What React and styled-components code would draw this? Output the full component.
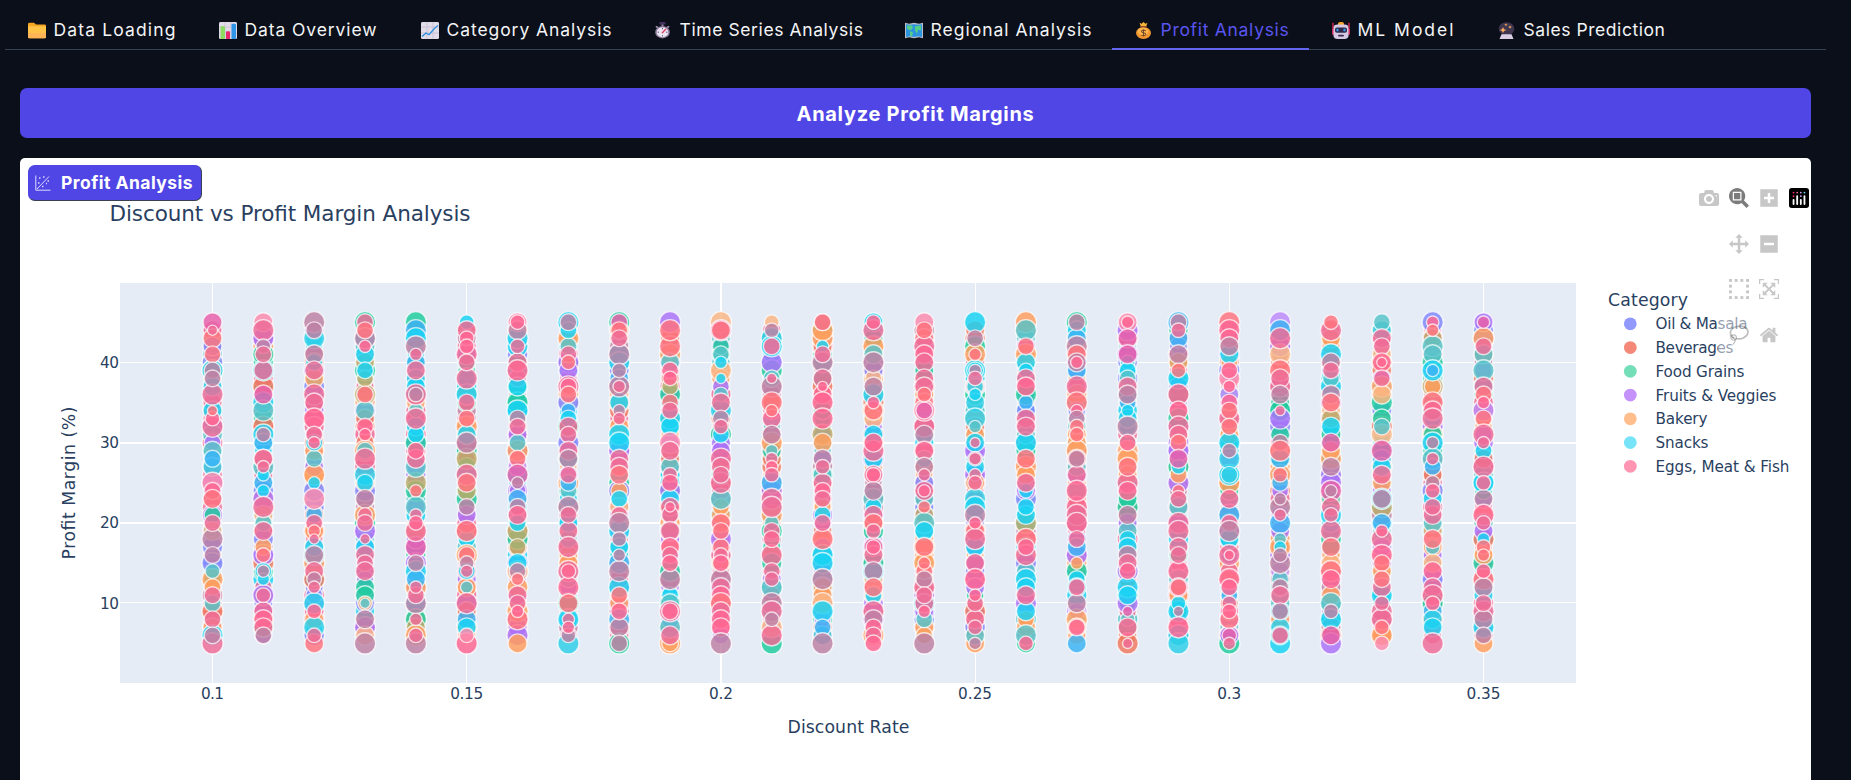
import React, { useLayoutEffect, useRef, useState } from "react";
import styled, { createGlobalStyle } from "styled-components";

const Global = createGlobalStyle`
  html, body { margin: 0; height: 100%; overflow: hidden; background: #0b0f19; }
  * { box-sizing: border-box; }
`;

const Page = styled.main`
  height: 780px;
  overflow: hidden;
  background: #0b0f19;
  font-family: Inter, "Liberation Sans", sans-serif;
`;
const TabBar = styled.nav`
  display: flex;
  width: 1821px;
  height: 50px;
  margin-left: 5px;
  border-bottom: 1px solid #374151;
`;
const Tab = styled.button`
  display: flex;
  align-items: center;
  flex: none;
  gap: 8px;
  width: ${(p) => p.$width}px;
  height: 50px;
  padding: 12px 0 0 22.500px;
  border: 0;
  border-bottom: 2px solid ${(p) => (p.$active ? "#6366f1" : "transparent")};
  background: none;
  color: ${(p) => (p.$active ? "#5a55ee" : "#f3f4f6")};
  font: 400 17.500px/24px Inter, sans-serif;
  white-space: nowrap;
  svg { flex: none; }
`;
const Panel = styled.section`
  display: flex;
  flex-direction: column;
  gap: 20px;
  width: 1791px;
  margin: 38px 0 0 20px;
`;
const AnalyzeButton = styled.button`
  display: flex;
  align-items: center;
  justify-content: center;
  height: 50px;
  padding: 1px 0 0;
  border: 0;
  border-radius: 7px;
  background: #4f46e5;
  color: #fff;
  font: 700 20px/26px Inter, sans-serif;
`;
const PlotCard = styled.div`
  position: relative;
  height: 660px;
  border-radius: 5px 5px 0 0;
  background: #fff;
  overflow: hidden;
`;
const PlotBadge = styled.div`
  position: absolute;
  left: 8px;
  top: 7px;
  display: flex;
  align-items: center;
  gap: 10px;
  width: 174px;
  height: 36px;
  padding: 0 0 1px 6px;
  border: 1px solid #4f46e5;
  border-right-color: #374151;
  border-bottom-color: #374151;
  border-radius: 7px;
  background: #4f46e5;
  color: #fff;
  font: 700 17.500px/24px Inter, sans-serif;
  svg { flex: none; }
`;
const ModeBar = styled.div`
  position: absolute;
  top: 30px;
  right: 2px;
  display: flex;
  gap: 10px;
`;
const ModeGroup = styled.div`
  display: flex;
  flex-direction: column;
  gap: 25.700px;
  width: 20px;
`;
const ModeOverlay = styled.div`
  position: absolute;
  top: 28px;
  right: 0;
  width: 93px;
  height: 167px;
  background: rgba(255, 255, 255, 0.5);
`;
const ModeIcon = styled.svg`
  display: block;
  width: 20px;
  height: 20px;
  fill: ${(p) => (p.$active ? "rgba(68,68,68,.7)" : "rgba(68,68,68,.3)")};
`;
const Chart = styled.svg`
  display: block;
  font-family: "DejaVu Sans", Verdana, sans-serif;
  fill: #2a3f5f;
`;
const Word = styled.span`
  display: inline-block;
  white-space: nowrap;
`;

/* Tracks a label so that it spans a given width. */
function Label({ text, width }) {
  const ref = useRef(null);
  const [track, setTrack] = useState(0);
  useLayoutEffect(() => {
    const natural = ref.current.getBoundingClientRect().width - track * text.length;
    setTrack((width - natural) / text.length);
  }, [text, width]);
  return <Word ref={ref} style={{ letterSpacing: track }}>{text}</Word>;
}

const emoji = {
  folder: (
    <>
      <path d="M0 2.5Q0 1 1.5 1H6l2 2h8.5Q18 3 18 4.5V9H0z" fill="#f5a623" />
      <path d="M0 5h16.500Q18 5 18 6v12q0 1-1.500 1h-15Q0 19 0 18z" fill="#ffc348" />
      <path d="M0 13h18v5q0 1-1.500 1h-15Q0 19 0 18z" fill="#ffb555" />
    </>
  ),
  bars: (
    <>
      <rect width="18" height="20" y="0" rx="1.500" fill="#e2dbea" />
      <path d="M6 0v20M12 0v20M0 6h18M0 13h18" stroke="#c9bfd6" strokeWidth=".7" />
      <rect x="1.500" y="5" width="4.500" height="15" rx="1" fill="#8ddb62" />
      <rect x="7" y="11" width="4" height="9" rx="1" fill="#e8286e" />
      <rect x="12.500" y="2" width="4.500" height="18" rx="1" fill="#2f95e6" />
    </>
  ),
  trend: (
    <>
      <rect width="18" height="20" rx="1.500" fill="#e2dbea" />
      <path d="M6 0v20M12 0v20M0 6h18M0 13h18" stroke="#c5b8d0" strokeWidth=".8" />
      <path d="M1 17l4-4 3 2 5-7 4-4" fill="none" stroke="#2c8fdc" strokeWidth="1.500" />
    </>
  ),
  watch: (
    <>
      <rect x="5.500" y="0" width="6" height="3" rx="1" fill="#45305f" />
      <path d="M8.500 3v2M2 5l2 2M15 5l-2 2" stroke="#9b8bab" strokeWidth="2" />
      <circle cx="8.500" cy="12" r="7.300" fill="#8b7b9c" />
      <circle cx="8.500" cy="12" r="5.800" fill="#ece6f2" />
      <path d="M8.500 7v1.500M8.500 15.500V17M3.500 12H5M12 12h1.500" stroke="#5b4670" />
      <path d="M8 13l4-5" stroke="#e03a5c" strokeWidth="1.500" />
    </>
  ),
  map: (
    <>
      <path d="M0 1l4 1 5-1 5 1 4-1v18l-4-1-5 1-5-1-4 1z" fill="#b9bfc8" />
      <path d="M1 2.500l4 .8 4-.8 4 .8 4-.8v15l-4-.8-4 .8-4-.8-4 .8z" fill="#2c93df" />
      <path d="M2 4l5 0 1 3-3 3-3-2zM5 11l3 1-1 5-2-1zM10 5l6-1v6l-3-1-1 5-2-4z" fill="#55cf88" />
    </>
  ),
  money: (
    <>
      <path d="M4.500 1l2 1 2-2 2 2 2-1-1.500 5H6z" fill="#f7b535" />
      <ellipse cx="8.500" cy="13" rx="7.500" ry="7" fill="#f0962f" />
      <ellipse cx="8" cy="11" rx="5.500" ry="4.500" fill="#ffb54b" />
      <path d="M5 5.500h7" stroke="#8b4a32" strokeWidth="1.500" />
      <path d="M10.800 10.500Q8.500 8.500 6.700 10.300 6 12 8.500 12.700q3 .8 2 2.600-1.800 1.700-4.200.2M8.500 8.500v8.500" fill="none" stroke="#72482c" strokeWidth="1.100" />
    </>
  ),
  robot: (
    <>
      <path d="M1 1v8M17 1v8" stroke="#e0264f" strokeWidth="1.400" />
      <rect x="6" y="0" width="6" height="5" rx="2" fill="#f6a52f" />
      <rect x="0" y="8" width="3" height="7" rx="1" fill="#d42f63" />
      <rect x="15" y="8" width="3" height="7" rx="1" fill="#d42f63" />
      <rect x="1.500" y="3" width="15" height="17" rx="4" fill="#d6c9e3" />
      <rect x="3" y="6.500" width="12" height="6" rx="2" fill="#332849" />
      <path d="M5.500 8v3M12.500 8v3" stroke="#2aa8f2" strokeWidth="2" />
      <rect x="6" y="15" width="6" height="2" rx="1" fill="#3d2e50" />
    </>
  ),
  crystal: (
    <>
      <circle cx="8.500" cy="8" r="7.800" fill="#40354f" />
      <path d="M3.500 14.500h10l2 5.500H1.500z" fill="#d9cee3" />
      <path d="M5 6l1 2.500L8.500 9.500 6 10.500 5 13 4 10.500 1.800 9.500 4 8.500zM12 4l.6 1.400L14 6l-1.400.6L12 8l-.6-1.400L10 6l1.400-.6zM8 1.500l.5 1.300 1.300.5-1.300.5L8 5l-.5-1.300-1.300-.5 1.300-.5z" fill="#ffb05c" />
    </>
  ),
};

const tabs = [
  ["folder", "Data Loading", 191, 123],
  ["bars", "Data Overview", 202, 133],
  ["trend", "Category Analysis", 233, 166],
  ["watch", "Time Series Analysis", 251, 184],
  ["map", "Regional Analysis", 230, 162],
  ["money", "Profit Analysis", 197, 129],
  ["robot", "ML Model", 166, 98],
  ["crystal", "Sales Prediction", 210, 142],
];

const palette = {
  B: "#8088fb", R: "#f07960", G: "#20cc9e", V: "#ab72f8", W: "#bd8afb",
  A: "#bdaa6a", L: "#fab684", O: "#ff9f5e",
  T: "#58c3c9", D: "#30cfe8", U: "#3db4f4", C: "#19d3f3",
  M: "#bf82a5", H: "#fc8cae", K: "#ee6d97", S: "#ff7380", E: "#e760a9", P: "#ff6692",
};
const layerOf = { B: 0, R: 1, G: 2, V: 3, W: 3, A: 4, L: 4, O: 4, T: 5, D: 5, U: 5, C: 5 };

/* One line for each discount rate: margin, tint, radius (a = 10). */
const series = [
  "45E9 44K5 43S9 42B9 41S8 39Da 39M8 38M8 37C9 36Ka 34C9 34S5 33P7 32Ka 30V8 29T9 28U8 27D9 25Ha 24P8 23S9 21G8 20K8 19L9 18Ma 16M8 15Ba 14T7 13Oa 12O8 11K8 10T8 9Ra 8K8 7O9 6Ca 6M8 5Ka",
  "45H9 44Ka 43Va 42M7 41Ga 41K8 39Ca 39K9 37Ra 36E9 35Ca 34Ta 32Ra 31Ca 31M7 30U9 28S9 28K9 27K6 27Ta 26C6 25U9 24C6 23Va 22Ka 21L9 20T8 19K9 17O8 16Va 16S7 15Ra 14C8 14M6 13C6 11Va 11K7 9K9 8P9 7P9 6M8",
  "45Ma 44M8 43Da 41M9 40C8 39K9 38O9 36Ka 35K9 33Pa 31K8 30P6 30C8 29O9 28T8 27V9 26Oa 25C6 24Ba 23Ha 21U8 20K8 19S6 18K5 19O9 17C9 16M9 16Ta 15Oa 14K9 13M7 13Ra 12K6 11B8 10Da 9P7 8O9 7Da 6K7 5S9",
  "45Ga 45K8 44S8 43Ma 42P6 41C9 40A9 39C8 39Ga 38A8 36Aa 36S8 34T9 33R9 32P8 31P6 29Oa 29T8 28Ka 26Da 25C8 24Ba 25O9 23M9 21Oa 21K7 20Ga 20K8 19Va 18K5 17C9 16K9 15K8 14K9 13B8 12G9 11G9 10B9 10L7 10T5 8M9 7Va 6L9 5Ma",
  "45Ga 44Ua 43Ca 42Ma 41K6 40U9 39K9 38C9 37C9 36Ka 36M7 35L9 34T7 33Ka 32C9 31C8 30Ga 29P8 28K9 27Ta 25Aa 24Ga 24S6 22Ta 21K6 20P7 19Ka 17Ea 15M8 15Va 14Ca 13U9 12K6 12Oa 11K8 10Ma 8K6 8Ga 7A9 6K7 6Oa 5Ma",
  "45C7 44K9 43P7 42P7 41Ka 40K8 38Ka 36Ca 35P8 33S8 32Oa 31C9 30Ma 28Aa 26Ka 25S9 24A9 23Ga 22M8 21V9 19Sa 16Oa 16S8 15M7 14K6 14C8 12T6 12O9 10Ka 9R9 8U9 7C9 6H7 5Pa",
  "45H9 45P7 44M9 43Ca 42K7 40K9 39Pa 37C9 35Ga 34Ca 33M8 32K8 31V9 30T8 29Oa 28S8 27W9 26Ea 25M6 24V8 23U9 22M8 21P9 20C8 19Aa 18Ga 17A8 17R9 15C9 15Ba 14M8 13S6 14La 11K9 10K8 9P6 9Oa 8Sa 7V9 6Va 5O9",
  "45Ca 45M8 44C8 43Oa 42T8 41K8 40Va 39V9 40S7 37Ka 37P8 36S8 35Ba 34U7 33C8 32K9 32Ga 31K8 30Ba 29K9 28M9 28C9 26K8 26W9 25U8 24T8 22Ma 21K8 20C9 19K9 17Ka 15O9 14Ka 14P7 12Pa 10S9 10Ga 8Ca 8K6 7P6 6M7 5Da",
  "45Ga 45E8 44S8 43K8 44O9 41Ma 40Ca 39M7 38U9 37Ma 37K6 35C9 34M6 33K6 31Ca 30Ca 29Va 28K9 27K9 26S9 24Ba 24O8 23C8 22L9 21K8 21V9 20Ma 19Ca 18M7 17C9 16M6 15Ua 14Ma 12Ca 11S8 10O9 9P8 8Ua 7M9 5Ga 5M8",
  "45Va 44Sa 42Sa 41Oa 40T9 39P8 38P7 37A8 36Ga 35S8 34K8 33Ca 32C9 30Ha 29K9 28R9 27T9 26K7 25P8 24Va 23C9 22K9 22P5 21K8 19K9 17P9 16K8 15P8 14Ga 13Ma 11C8 10T9 9Ka 9P8 7Ta 6K9 5Oa 5O8",
  "45La 44Ea 44S9 42G8 41T8 40C6 39La 38C5 37V8 36T7 35K9 34Da 33M8 32K7 31C8 31Ga 30V9 29V9 28Ka 27K9 26K8 25Ka 23Ta 22O8 21O9 20S9 19S8 18Va 17S8 16K7 15P8 13Ma 12K9 11P9 10Sa 9K9 8P9 7P9 5Ma",
  "45L7 44M7 43Ca 42Ca 42P8 40Va 39Ga 38T8 37Ma 38K5 35Sa 34S6 33P9 31M9 30Oa 29T6 29G9 28K6 28R9 27P6 26K7 25Ua 24Va 23Ka 22Ka 21Oa 20T7 19K8 19Ga 18P8 16Ka 14K8 13K7 12Ta 10Ma 9Ka 8M7 7La 6Ka 5Ga",
  "45M8 45S8 44Oa 43Oa 42R9 42C6 41K8 40Ma 38K9 37P5 36P9 35Pa 33Pa 31Aa 30O9 28M9 27K7 26T9 25K9 24P8 23K8 22O8 21C8 20K8 18Sa 16Ca 15Ca 13Ma 12O9 11O9 10La 9Ca 8W8 7U8 6D9 5Ma",
  "45C9 44Ka 45P7 43G9 42Oa 41T9 40Ma 39B9 38L8 37M9 36Ca 35P6 35Ra 34S9 34Oa 33L9 31C9 29Ka 30P9 28Va 28C9 26K9 26P7 24M9 23Ta 22C8 21K9 20S9 19K7 17K9 17P7 16K9 15Ga 14M9 14Ca 13L9 12S9 11L9 11C8 9Ka 8M9 7P8 6Oa 6K8 5P8",
  "45H9 44S8 43S9 42Ka 41P9 40K9 39G9 38K9 37K9 36S7 36O9 35S9 34Ha 34E8 32Ka 31M9 29P9 28T8 27M9 26K6 25B9 24K9 24P6 23T9 22S6 21A9 20Ta 19C9 17S9 17Oa 15S6 15Oa 14S8 13M8 12Ka 11K8 10K9 10Ca 9P6 9V9 8T8 7O9 6O8 5Ma",
  "45Ca 43M8 42Ga 41Oa 41S6 39Ca 39C8 39M6 38K7 37D8 37L9 36C6 35D9 33Da 32T6 31O9 30C9 30K5 29Va 28K6 28M7 27C9 26K6 26Va 25K7 25O9 23Da 22Ca 21Ma 20P6 19S9 18Ka 17C9 15K9 15V9 13Pa 11P6 12V9 10K8 9Ra 8K9 7K7 6T9 5O9 5M6",
  "45Oa 44Ta 42S8 42V9 41Oa 40D9 39C7 38K9 37P9 36Ga 35U7 34B9 33K9 32K9 31T9 30Ca 28S9 27Oa 26O9 25K9 24C7 24V9 23Ba 22C8 21C9 20Aa 18Sa 16Ka 17P8 15Ba 14T9 13Ca 12C9 11K9 10Va 9C9 8O8 7O9 6Ta 5G9 5P7",
  "45Ga 45M8 44C9 43U9 42Ma 41S9 40M9 40P6 39U9 37Ka 35Sa 34P6 33M8 32S7 31S7 31O9 30O9 29Oa 28M8 28S9 27T9 26K9 24Pa 22Pa 21Ka 20Ka 18K8 17U9 16Va 15O6 14Ga 13C8 12P8 12C9 10M9 9W8 8Oa 7P8 7L9 5U9",
  "45H9 45P6 44Va 43E9 41E9 41Va 40D7 39C8 38T8 37K9 36M9 35U8 34C6 33C9 32Ma 30P8 29La 28Oa 27S9 26O9 25Ka 24P9 23G9 22Ga 21M9 20V9 19T9 18C8 17C9 16M9 15K9 14P8 14Va 12Ca 11C9 10Va 9E5 8T7 7P9 5Ra 5K5",
  "45Ua 45M8 44K7 43U9 41M9 40O9 39S7 38Ca 36Pa 34P9 33Ga 32Ka 31K9 30S8 31O9 29Va 28E9 27C7 27Ga 26O8 25Va 24S6 23K8 22T9 20Ka 19Ka 17K9 16G9 16K8 14Pa 12E9 12S8 11O9 10C7 9Ca 9M5 7Pa 6Ca 5Da",
  "45Sa 44Pa 43P9 42M9 41C9 40O8 38Ha 39P8 39Ba 37P6 36W9 35P8 34S8 33Ka 32S8 31O9 30Ca 29M7 28Da 26Ca 26D8 25Oa 24G9 23P9 21Ua 20P8 19Ma 18C9 16Ka 16P5 13Pa 12P8 11U8 10K7 9P7 8S9 6V9 6E7 5Ga 5K6",
  "45Wa 44Ua 43Ka 42Va 41La 39Sa 38K9 37Ka 36M9 35G9 34K5 34Ga 33Va 32Ba 31G9 30M8 29Sa 28U9 26Oa 26S7 25U8 24V8 23M6 22Ma 21K6 20Ua 19V9 18T6 17Oa 17C6 16M7 15Ma 14W9 13T8 12T9 12M8 11K9 9C9 9M8 8O9 7D9 6P8 6C9 5Ca",
  "45S7 44Ka 43O9 41Ca 40M9 39K8 40O9 38T8 37Ca 36M9 35S9 35Va 34L9 33A9 32C9 30E9 29O9 28Oa 27M9 26Va 25Va 24Ea 24M6 23G9 22K9 21K7 21Ca 19Ka 17S9 15L9 14Sa 13P9 11O9 10Ta 9M7 8Ca 6E9 6Ra 5Va",
  "45T8 44C9 43K9 42K8 41L9 40P9 40P5 38K8 37Oa 36L9 35Ga 33G9 32Ra 32T8 31La 29Ea 28U9 27C9 26K9 25O9 23M9 23Ca 22Aa 20U9 18Ka 19P6 17W9 16Pa 15S8 14O9 13S8 12K9 11Ca 10K7 8Ka 7S7 6Oa 5H7",
  "45Ba 45P6 44S6 43A9 42Ta 41T9 40Ga 39Ca 39U6 38B8 37Aa 37O8 35Sa 34P9 33Ka 31G9 30Ca 30M6 28Ta 28K6 27U8 26R9 25M7 24Ba 24P7 23C9 22K8 21K9 20T9 19O9 18S9 17T7 17O9 16V9 15L9 14P9 13Ba 12K9 11Ka 10P7 10Ga 9U9 8D9 7C9 5Ka",
  "45V9 45E6 43Oa 42K8 41T9 39Ta 37K9 36S8 35P6 34Wa 33S8 31Ka 30K6 29C8 28R9 27Ka 25Ca 25P7 23M9 21Pa 20K7 19V9 18C6 18Ra 17S7 16O9 16S6 15Ga 14P7 13Sa 12M9 11C9 10K8 9Ka 8M9 7Ca 6M8 5O9",
];

const X0 = 192.5;
const DX = 50.84;
const yOf = (v) => 485.4 - (v - 5) * 8.03;

function buildColumn(line, col) {
  let seed = col * 7919 + 17;
  const rnd = () => {
    seed = (seed * 1103515245 + 12345) % 2147483648;
    return seed / 2147483648;
  };
  const under = [];
  const first = Number(line.match(/^\d+/)[0]);
  for (let v = first - 1; v >= 6; v -= 1) {
    under.push({ v, fill: palette["BRGVOCTKMK"[Math.floor(rnd() * 10)]], r: 8.5 + rnd() * 2 });
  }
  under.sort(() => rnd() - 0.5);
  const over = line.split(" ").map((token) => {
    const [, v, tint, size] = token.match(/^(\d+)([A-Z])(\w)$/);
    const s = parseInt(size, 16);
    return { v: Number(v), tint, fill: palette[tint], r: s * 1.1 - 0.4, order: Math.round((s + rnd() * 1.5) / 2) };
  });
  const depth = (p) => layerOf[p.tint] ?? 6;
  over.sort((a, b) => depth(a) - depth(b) || b.order - a.order);
  return [...under, ...over];
}

function Markers() {
  return series.map((line, col) => (
    <g key={col} stroke="#fff" strokeOpacity=".72" strokeWidth="1.400" fillOpacity=".84">
      {buildColumn(line, col).map((p, i) => (
        <circle key={i} cx={X0 + col * DX} cy={yOf(p.v)} r={p.r} fill={p.fill} />
      ))}
    </g>
  ));
}

const legend = [
  ["Oil & Masala", "#9299fc", 92],
  ["Beverages", "#f4897a", 78],
  ["Food Grains", "#74deb9", 89],
  ["Fruits & Veggies", "#c592fc", 121],
  ["Bakery", "#ffbe8c", 52],
  ["Snacks", "#76e3f8", 53],
  ["Eggs, Meat & Fish", "#ff94b3", 134],
];

const xTicks = [["0.1", 23], ["0.15", 33], ["0.2", 24], ["0.25", 34], ["0.3", 24], ["0.35", 34]];

function ProfitChart() {
  return (
    <Chart width="1791" height="622" viewBox="0 0 1791 622">
      <text x="89.500" y="62.700" fontSize="21.500" textLength="361">Discount vs Profit Margin Analysis</text>
      <rect x="100" y="125" width="1456" height="400" fill="#e5ecf6" />
      <g fill="#fff">
        {[0, 5, 10, 15, 20, 25].map((c) => (
          <rect key={c} x={Math.floor(X0 + c * DX)} y="125" width={c === 10 ? 2 : 1} height="400" />
        ))}
        {[40, 30, 20, 10].map((v) => (
          <rect key={v} x="100" y={Math.floor(yOf(v) - 0.3)} width="1456" height={v === 30 || v === 20 ? 2 : 1} />
        ))}
      </g>
      <Markers />
      <g fontSize="15.300">
        {[40, 30, 20, 10].map((v) => (
          <text key={v} x="80" y={yOf(v) + 5.500} textLength="19">{v}</text>
        ))}
        {xTicks.map(([t, w], i) => (
          <text key={t} x={X0 + i * 5 * DX - w / 2} y="541.300" textLength={w}>{t}</text>
        ))}
      </g>
      <text x="767.500" y="574.700" fontSize="17.300" textLength="122">Discount Rate</text>
      <text transform="translate(54.700 401.500) rotate(-90)" fontSize="17.300" textLength="153">Profit Margin (%)</text>
      <text x="1588" y="147.500" fontSize="17.300" textLength="80">Category</text>
      {legend.map(([name, color, width], i) => (
        <g key={name}>
          <circle cx="1610.300" cy={165.8 + i * 23.75} r="6.400" fill={color} />
          <text x="1635.500" y={171.400 + i * 23.75} fontSize="15.200" textLength={width}>{name}</text>
        </g>
      ))}
    </Chart>
  );
}

function PlotlyIcon({ d, active, size = 1000 }) {
  return (
    <ModeIcon $active={active} viewBox={`${(size - 1000) / 2} 0 1000 1000`}>
      <path transform="matrix(1 0 0 -1 0 850)" d={d} />
    </ModeIcon>
  );
}

const shapes = {
  camera: "m500 450c-83 0-150-67-150-150 0-83 67-150 150-150 83 0 150 67 150 150 0 83-67 150-150 150z m400 150h-120c-16 0-34 13-39 29l-31 93c-6 15-23 28-40 28h-340c-16 0-34-13-39-28l-31-94c-6-15-23-28-40-28h-120c-55 0-100-45-100-100v-450c0-55 45-100 100-100h800c55 0 100 45 100 100v450c0 55-45 100-100 100z m-400-550c-138 0-250 112-250 250 0 138 112 250 250 250 138 0 250-112 250-250 0-138-112-250-250-250z m365 380c-19 0-35 16-35 35 0 19 16 35 35 35 19 0 35-16 35-35 0-19-16-35-35-35z",
  zoom: "m1000-25l-250 251c40 63 63 138 63 218 0 224-182 406-407 406-224 0-406-182-406-406s183-406 407-406c80 0 155 22 218 62l250-250 125 125z m-812 250l0 438 437 0 0-438-437 0z m62 375l313 0 0-312-313 0 0 312z",
  pan: "m1000 350l-187 188 0-125-250 0 0 250 125 0-188 187-187-187 125 0 0-250-250 0 0 125-188-188 186-187 0 125 252 0 0-250-125 0 187-188 188 188-125 0 0 250 250 0 0-126 187 188z",
  plus: "m1 787l0-875 875 0 0 875-875 0z m687-500l-187 0 0-187-125 0 0 187-188 0 0 125 188 0 0 187 125 0 0-187 187 0 0-125z",
  minus: "m0 788l0-876 876 0 0 876-876 0z m688-500l-500 0 0 125 500 0 0-125z",
  auto: "m250 850l-187 0-63 0 0-62 0-188 63 0 0 188 187 0 0 62z m688 0l-188 0 0-62 188 0 0-188 62 0 0 188 0 62-62 0z m-875-938l0 188-63 0 0-188 0-62 63 0 187 0 0 62-187 0z m875 188l0-188-188 0 0-62 188 0 62 0 0 62 0 188-62 0z m-125 188l-1 0-93-94-156 156 156 156 92-93 2 0 0 250-250 0 0-2 93-92-156-156-156 156 94 92 0 2-250 0 0-250 0 0 93 93 157-156-157-156-93 94 0 0 0-250 250 0 0 0-94 93 156 157 156-157-93-93 0 0 250 0 0 250z",
  home: "m786 296v-267q0-15-11-26t-25-10h-214v214h-143v-214h-214q-15 0-25 10t-11 26v267q0 1 0 2t0 2l321 264 321-264q1-1 1-4z m124 39l-34-41q-5-5-12-6h-2q-7 0-12 3l-386 322-386-322q-7-4-13-4-7 2-12 7l-35 41q-4 5-3 13t6 12l401 334q18 15 42 15t43-15l136-114v109q0 8 5 13t13 5h107q8 0 13-5t5-13v-227l122-102q5-5 6-12t-4-13z",
};

const selectDots = [];
for (let i = 0; i < 4; i += 1) {
  selectDots.push([i * 5.7, 0], [i * 5.7, 17.1]);
  if (i === 1 || i === 2) selectDots.push([0, i * 5.7], [17.1, i * 5.7]);
}

function ModeButtons() {
  return (
    <ModeBar>
      <ModeGroup>
        <PlotlyIcon d={shapes.camera} />
      </ModeGroup>
      <ModeGroup>
        <PlotlyIcon d={shapes.zoom} active />
        <PlotlyIcon d={shapes.pan} />
        <ModeIcon viewBox="0 0 20 20">
          {selectDots.map(([x, y]) => <rect key={`${x}-${y}`} x={x} y={y} width="2.900" height="2.900" />)}
        </ModeIcon>
        <ModeIcon viewBox="0 0 20 20">
          <g fill="none" stroke="rgba(68,68,68,.34)">
            <path d="M5 13.200C-.5 10 .5 3.800 7 1.800 14-.4 20 3 18.800 8.200 17.500 12.500 12 14.800 7 13.500" strokeWidth="1.700" />
            <ellipse cx="4.600" cy="12.400" rx="2.800" ry="2.600" strokeWidth="1.200" />
            <path d="M3 12.500q4 0 3 4l-2 3" strokeWidth="1.200" />
          </g>
        </ModeIcon>
      </ModeGroup>
      <ModeGroup>
        <PlotlyIcon d={shapes.plus} size={875} />
        <PlotlyIcon d={shapes.minus} size={875} />
        <PlotlyIcon d={shapes.auto} />
        <PlotlyIcon d={shapes.home} size={928} />
      </ModeGroup>
      <ModeGroup>
        <ModeIcon viewBox="0 0 132 132">
          <rect width="132" height="132" rx="18" fill="#000" />
          <path d="M30 78v28M54 54v52M78 78v28M102 54v52" stroke="#fff" strokeWidth="12" strokeLinecap="round" />
          <g fill="#ff2c6d"><circle cx="30" cy="30" r="6" /><circle cx="30" cy="54" r="6" /></g>
          <circle cx="54" cy="30" r="6" fill="#f06a9a" />
          <g fill="#c7a0ee"><circle cx="78" cy="30" r="6" /><circle cx="78" cy="54" r="6" /></g>
          <circle cx="102" cy="30" r="6" fill="#5fdcf5" />
        </ModeIcon>
      </ModeGroup>
    </ModeBar>
  );
}

export default function App() {
  return (
    <>
      <Global />
      <Page>
        <TabBar>
          {tabs.map(([icon, text, width, span]) => (
            <Tab key={text} $width={width} $active={icon === "money"}>
              <svg width="18" height="17" viewBox="0 0 18 20" preserveAspectRatio="none">{emoji[icon]}</svg>
              <Label text={text} width={span} />
            </Tab>
          ))}
        </TabBar>
        <Panel>
          <AnalyzeButton><Label text="Analyze Profit Margins" width={238} /></AnalyzeButton>
          <PlotCard>
            <ProfitChart />
            <PlotBadge>
              <svg width="16" height="16" viewBox="0 0 16 16" fill="none" stroke="#ddd9ff">
                <path d="M.8.500v14.700h14.700M2 14L14 1.500" />
                <path d="M4 3h1.500M8 2h1.500M3 8h1.500M7 11.500h1.500M12.500 6H14M11 8.500h1" strokeWidth="1.500" />
              </svg>
              <Label text="Profit Analysis" width={132} />
            </PlotBadge>
            <ModeOverlay />
            <ModeButtons />
          </PlotCard>
        </Panel>
      </Page>
    </>
  );
}
